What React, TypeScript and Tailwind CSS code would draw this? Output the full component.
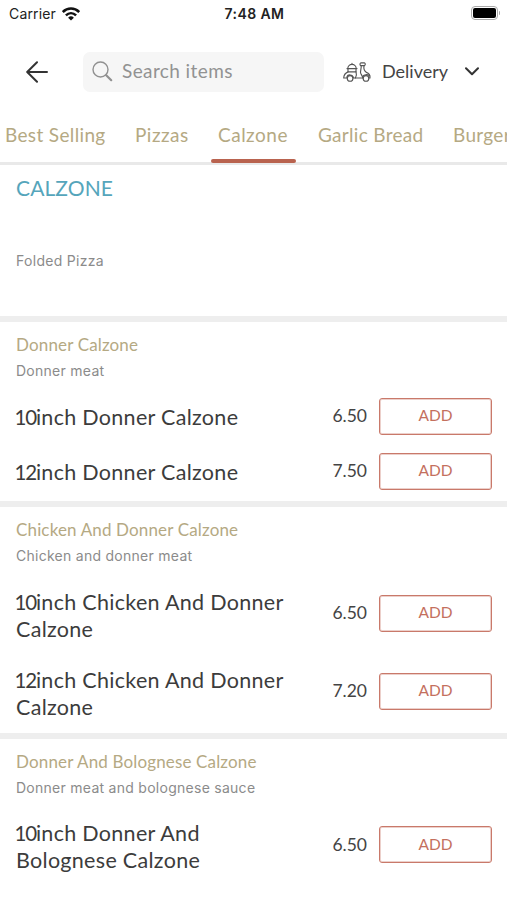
import { useState } from "react";

interface MenuItem {
  size: string;
  name: string;
  price: string;
}

interface MenuGroup {
  title: string;
  description: string;
  items: MenuItem[];
}

const tabs = [
  { label: "Best Selling", spacing: "tracking-[0.35px]", width: "w-[130px]" },
  { label: "Pizzas", spacing: "tracking-[0.5px]", width: "w-[83px]" },
  { label: "Calzone", spacing: "tracking-[0.5px]", width: "w-[100px]" },
  { label: "Garlic Bread", spacing: "tracking-[0.3px]", width: "w-[135px]" },
  { label: "Burgers", spacing: "tracking-[0.3px]", width: "w-[100px]" },
];

const groups: MenuGroup[] = [
  {
    title: "Donner Calzone",
    description: "Donner meat",
    items: [
      { size: "10", name: "inch Donner Calzone", price: "6.50" },
      { size: "12", name: "inch Donner Calzone", price: "7.50" },
    ],
  },
  {
    title: "Chicken And Donner Calzone",
    description: "Chicken and donner meat",
    items: [
      { size: "10", name: "inch Chicken And Donner Calzone", price: "6.50" },
      { size: "12", name: "inch Chicken And Donner Calzone", price: "7.20" },
    ],
  },
  {
    title: "Donner And Bolognese Calzone",
    description: "Donner meat and bolognese sauce",
    items: [{ size: "10", name: "inch Donner And Bolognese Calzone", price: "6.50" }],
  },
];

function WifiIcon() {
  return (
    <svg width="18" height="14" viewBox="0 0 18 14" fill="none" stroke="#111" strokeWidth="2.5">
      <path d="M.8 5C5.4.4 12.6.4 17.2 5" />
      <path d="M3.9 8.4c3-2.9 7.2-2.9 10.2 0" />
      <path d="M9 13.5 6.1 10.7a4.1 4.1 0 0 1 5.8 0Z" fill="#111" stroke="none" />
    </svg>
  );
}

function ScooterIcon() {
  return (
    <svg width="28" height="20" viewBox="0 0 28 20" fill="none" stroke="#555" strokeWidth="1.15" strokeLinejoin="round" strokeLinecap="round">
      {/* Delivery box and seat */}
      <path d="M4.8 6.6a4.2 4.2 0 0 1 8.4 0M9 2.4V1.3" />
      <path d="M4 6.6h10M5 6.8v3.1h8V6.8" />
      {/* Body */}
      <path d="M5 9.9C2.4 11 .8 13.2.7 16h3.1M13 9.9c.8 2.2.5 4.2-.6 6.1h-2M3.9 15c.8-2.9 5.8-2.9 6.6 1" />
      <path d="M12.4 16h7.4" />
      {/* Handlebar and front shield */}
      <path d="M17.6 3.6c-.9-.6-.8-2.4.4-2.8h3.3c1.2.4 1.3 2.2.2 2.8Z" />
      <path d="M18.2 3.6c.3 2.6-1 5-.6 7.4.3 1.4 1.9 2.3 2.2 5M21 3.6c-.5 3 .6 5.6 2.4 6.8 2.3.7 3.8 2.8 3.6 5.6h-1" />
      <path d="M19.7 14.3c1.4-1.8 4.6-2.3 7-.4" />
      <circle cx="7.1" cy="16.4" r="2.8" />
      <circle cx="23" cy="16.4" r="2.8" />
    </svg>
  );
}

function StatusBar() {
  return (
    <div className="flex h-7 items-center justify-between pl-[9px] pr-[7px] font-['Inter',sans-serif] text-[14px] text-[#222]">
      <div className="flex w-[150px] items-center gap-1.5 pb-px">
        <span className="tracking-[0.15px]">Carrier</span>
        <WifiIcon />
      </div>
      <span className="pb-px font-semibold tracking-[0.4px]">7:48 AM</span>
      <div className="flex w-[150px] items-center justify-end gap-px pb-[2px]">
        <div className="h-[14px] w-[27px] rounded-[4px] border border-[#aaa] p-[1px]">
          <div className="h-full w-full rounded-[2px] bg-black" />
        </div>
        <div className="h-1 w-[1.5px] rounded-r bg-[#aaa]" />
      </div>
    </div>
  );
}

function ItemRow({ item }: { item: MenuItem }) {
  return (
    <div className="flex min-h-[55px] items-center">
      <p className="w-[290px] self-start pb-[9.5px] pt-[14.5px] text-[21.5px] leading-[27px] tracking-[0.3px] text-[#3c3c3c]">
        <span className="-ml-[1.5px] text-[20.5px] leading-none tracking-[-1.2px]">{item.size}</span>
        {item.name}
      </p>
      <span className="ml-auto text-[17.5px] text-[#444]">{item.price}</span>
      <button className="ml-3 h-[37px] w-[113px] rounded-[3px] border border-[#c9796a] pb-px text-[15.5px] text-[#c4705e] shadow-[inset_0_0_0_1px_rgba(201,121,106,0.35)]">
        ADD
      </button>
    </div>
  );
}

export default function App() {
  const [activeTab, setActiveTab] = useState("Calzone");

  return (
    <div className="h-[900px] w-[507px] overflow-hidden bg-white font-['Lato',sans-serif]">
      <StatusBar />

      {/* Search and order type */}
      <div className="flex h-[87px] items-center">
        <button className="ml-[26px] w-[57px]" aria-label="Back">
          <svg width="23" height="22" viewBox="0 0 23 22" fill="none" stroke="#333" strokeWidth="2" strokeLinecap="round" strokeLinejoin="round">
            <path d="M21 11H1.5M11 1.2 1.2 11 11 20.8" />
          </svg>
        </button>
        <div className="flex h-10 w-[241px] items-center rounded-[7px] bg-[#f6f6f6] pl-[9px]">
          <svg width="21" height="21" viewBox="0 0 21 21" fill="none" stroke="#919191" strokeWidth="1.4" strokeLinecap="round">
            <circle cx="8.5" cy="8.5" r="7.5" />
            <path d="m14.2 14.2 5 5" strokeWidth="2.2" />
          </svg>
          <span className="ml-[9px] text-[19px] tracking-[0.4px] text-[#929292]">Search items</span>
        </div>
        <button className="ml-[19px] flex items-center text-[#444]">
          <ScooterIcon />
          <span className="ml-[11px] text-[18px]">Delivery</span>
          <svg className="ml-[17px]" width="14" height="9" viewBox="0 0 14 9" fill="none" stroke="#333" strokeWidth="2" strokeLinecap="round" strokeLinejoin="round">
            <path d="m1 1.2 6 6 6-6" />
          </svg>
        </button>
      </div>

      {/* Category tabs */}
      <div className="flex h-[50px] border-b-[3px] border-[#e9e9e9] pl-[5px]">
        {tabs.map((tab) => (
          <button
            key={tab.label}
            onClick={() => setActiveTab(tab.label)}
            className={`relative flex h-[47px] shrink-0 pt-[8px] text-left text-[19px] leading-[24px] text-[#b5a983] ${tab.width} ${tab.spacing}`}
          >
            {tab.label}
            {activeTab === tab.label && (
              <span className="absolute bottom-[-1px] left-[-7px] h-1 w-[85px] rounded-sm bg-[#b9634f]" />
            )}
          </button>
        ))}
      </div>

      {/* Category heading */}
      <div className="h-[151px] px-4 pt-[9px]">
        <h1 className="text-[21px] leading-[27px] tracking-[0.1px] text-[#55a5bb]">CALZONE</h1>
        <p className="mt-[50px] font-['Inter',sans-serif] text-[14px] leading-5 tracking-[0.3px] text-[#8b8b8b]">Folded Pizza</p>
      </div>

      {groups.map((group) => (
        <section key={group.title} className="border-t-[6px] border-[#eeeeee] pb-[2.4px] pl-4 pr-[15px]">
          <div className="h-[67px] pt-[12px]">
            <h2 className="text-[17px] leading-[22px] tracking-[0.15px] text-[#b5a983]">{group.title}</h2>
            <p className="mt-[5px] font-['Inter',sans-serif] text-[14px] leading-5 tracking-[0.27px] text-[#8b8b8b]">{group.description}</p>
          </div>
          {group.items.map((item) => (
            <ItemRow key={item.size} item={item} />
          ))}
        </section>
      ))}
    </div>
  );
}
